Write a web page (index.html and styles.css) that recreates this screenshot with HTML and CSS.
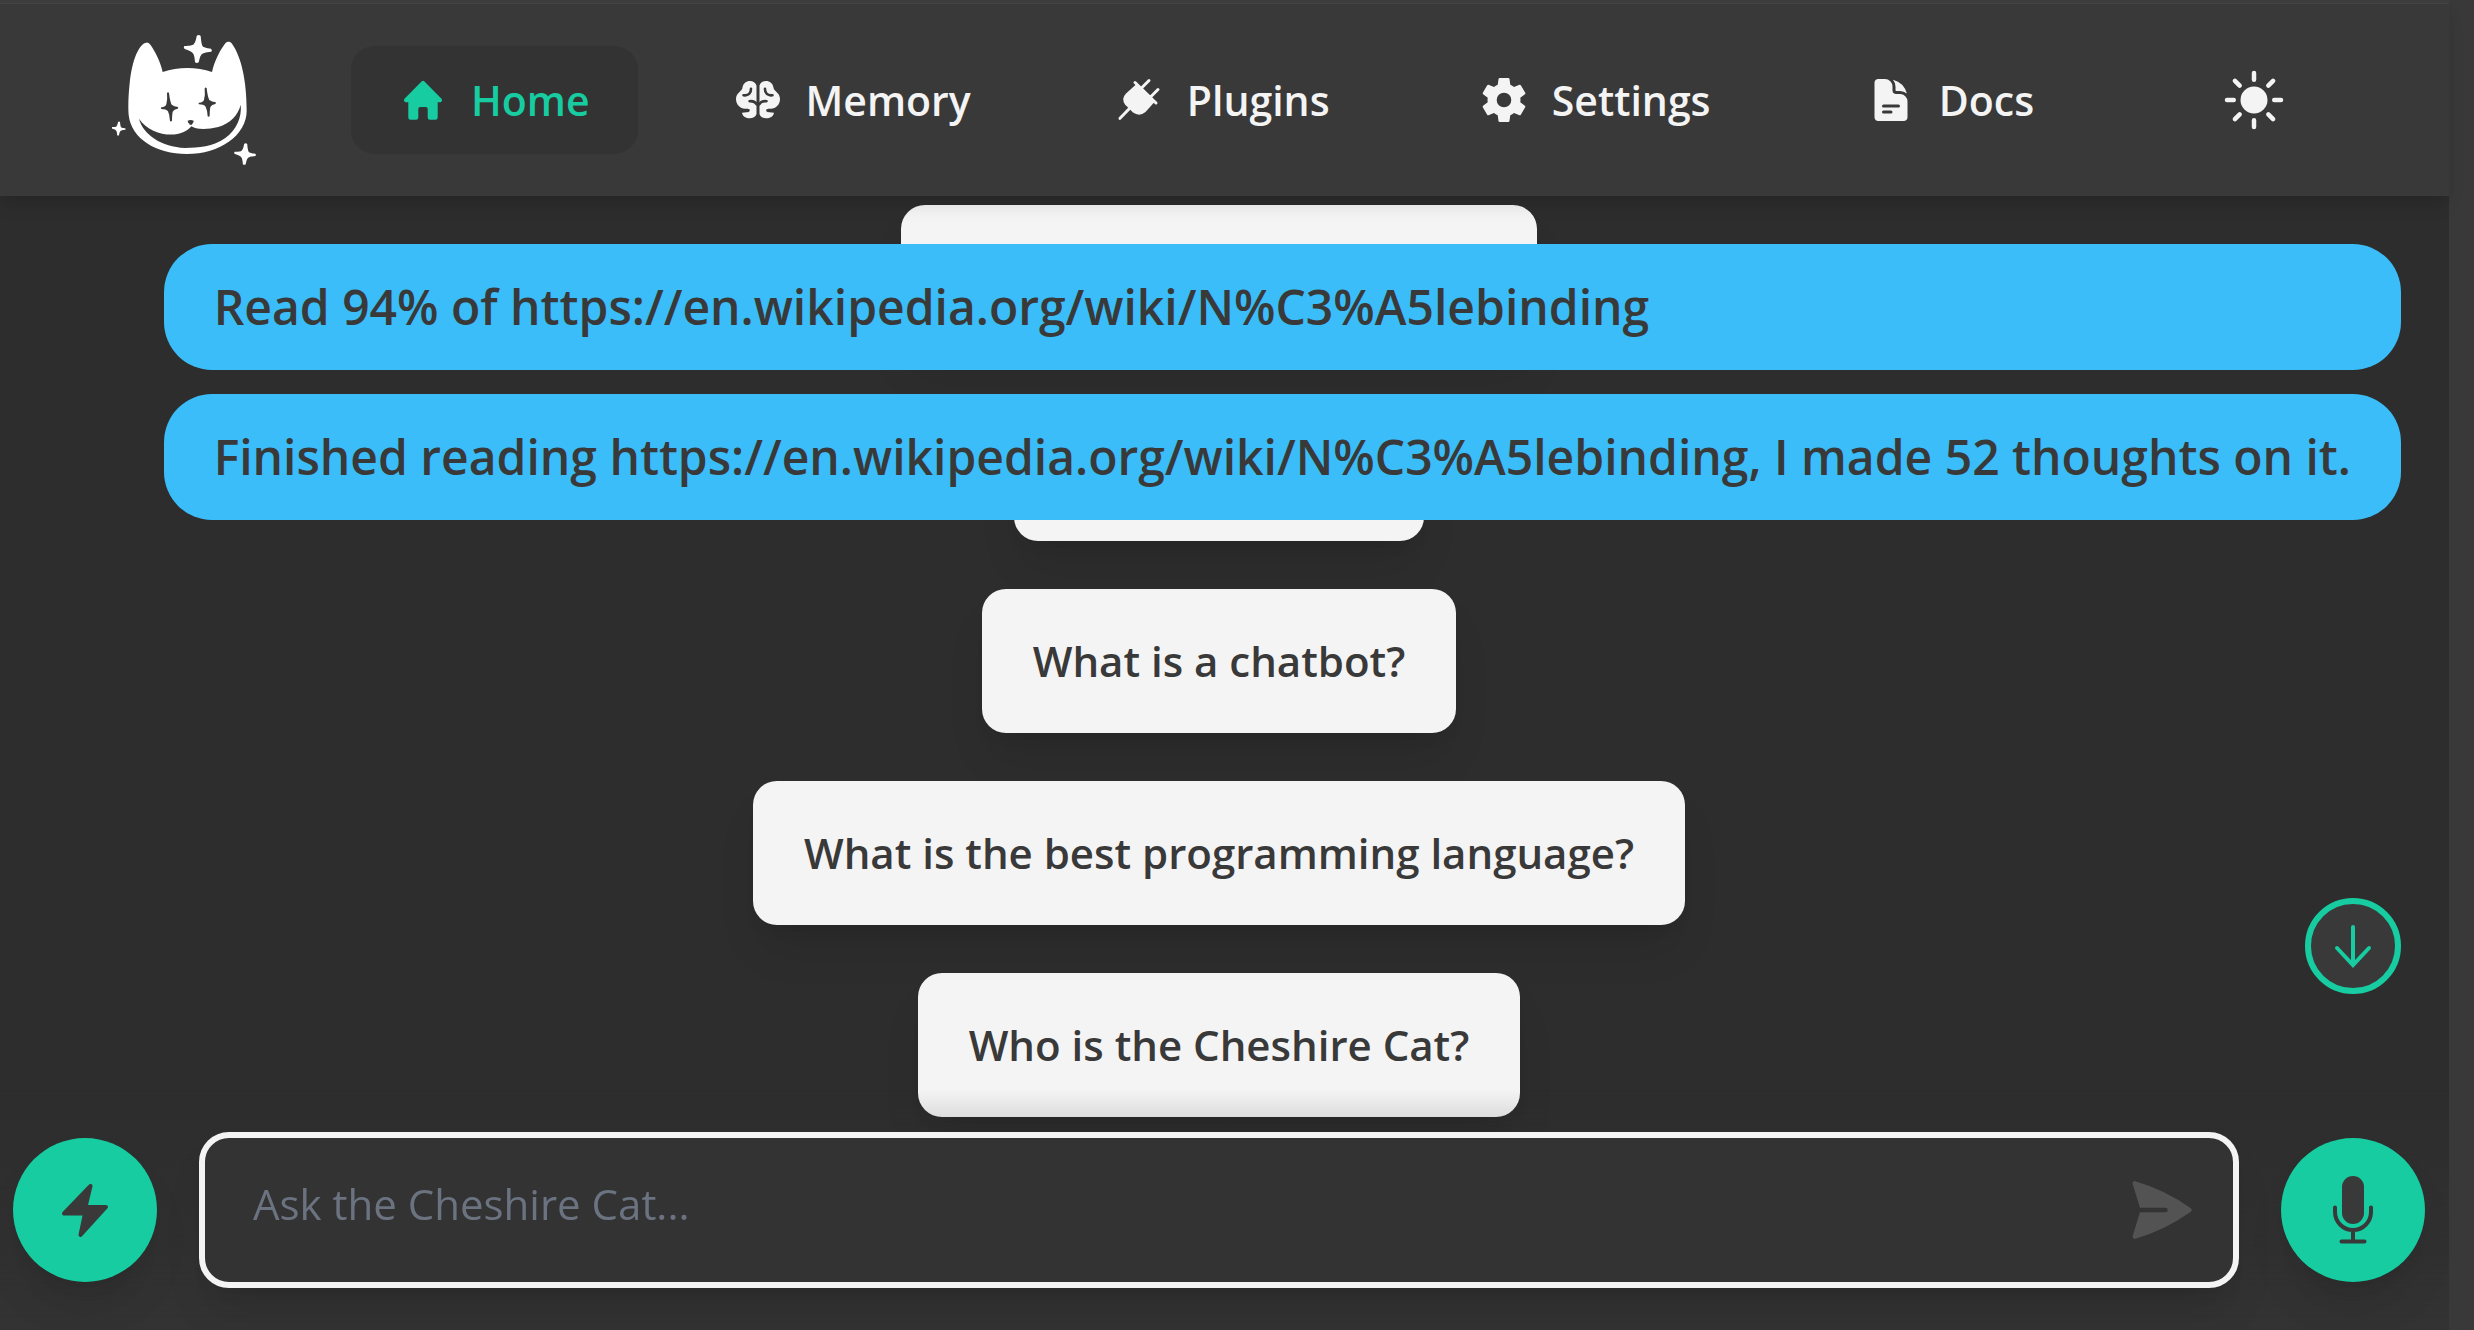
FILE: index.html
```html
<!DOCTYPE html>
<html lang="en">
<head>
<meta charset="utf-8">
<meta name="viewport" content="width=device-width, initial-scale=1">
<title>Cheshire Cat</title>
<link rel="stylesheet" href="styles.css">
</head>
<body>
<header class="topbar">
  <a class="logo" href="#" aria-label="Cheshire Cat">
    <svg viewBox="66 42 432 396" aria-hidden="true">
      <path fill="#fff" d="M169 68C150 70 127 112 119 190C115 225 114 262 116 285C124 357 200 402 290 402C390 402 470 345 470 272C470 185 455 112 426 71C420 64 412 64 406 70C389 92 373 125 366 156C320 140 265 140 218 156C211 125 196 95 180 73Q175 67 169 68Z"/>
      <g fill="#393939">
        <path d="M147 296C172 334 225 349 262 342C280 339 296 330 304 319C315 328 350 330 385 321C420 310 445 285 452 254C456 290 440 330 405 355C370 380 325 384 285 384C215 380 160 345 147 296Z"/>
        <path d="M293 302Q302 298 311 302Q311 308 307 311L306 314H299L298 311Q293 308 293 302Z"/>
        <path id="eye" d="M231 219Q234 214 237 219Q240 245 245 254Q252 260 264 261Q266 263 263 266Q252 268 248 275Q246 285 246 302Q243 306 240 303Q239 284 234 274Q228 267 214 267Q211 265 214 262Q227 261 229 253Q233 240 231 219Z"/>
        <use href="#eye" x="113" y="-14"/>
      </g>
      <g fill="#fff">
        <path id="star" d="M320 48Q326 42 332 48C334 70 336 79 341 81C350 85 357 85 363 86Q368 90 364 95C345 97 338 99 334 104C328 112 328 122 326 127Q321 131 315 127C314 110 312 104 308 99C304 93 292 90 284 87Q279 83 283 78C300 78 307 77 311 73C317 66 318 58 320 48Z"/>
        <use href="#star" transform="translate(-76 282) scale(.5)"/>
        <use href="#star" transform="translate(216 335) scale(.77)"/>
      </g>
    </svg>
  </a>
  <nav class="menu" aria-label="Main">
    <a class="menu-link is-active" href="#">
      <svg class="icon" viewBox="0 0 48 48" aria-hidden="true"><path fill="currentColor" d="M22.500 5.500Q24 4 25.500 5.500L42.500 22.800Q44 25 41.500 26.300H38.700V41.500Q38.700 43.700 36.500 43.700H31Q28.700 43.700 28.700 41.500V33Q28.700 31 26.700 31H21.300Q19.300 31 19.300 33V41.500Q19.300 43.700 17 43.700H11.500Q9.300 43.700 9.300 41.500V26.300H6.500Q4 25 5.500 22.800Z"/></svg>
      Home
    </a>
    <a class="menu-link" href="#">
      <svg class="icon" viewBox="0 0 48 48" aria-hidden="true">
        <g id="lobe"><path fill="currentColor" d="M22.500 9.500C21 3.500 9.500 2.500 8.300 12.500C7.500 15.500 2 17 2 23C2 29 7 34 13.500 32.500L15 36L8 36.700C9 43.500 20.500 44.500 22.500 38Z"/>
        <path fill="none" stroke="#393939" stroke-width="2.600" stroke-linecap="round" d="M9.500 19.200C14.500 20 17.200 17 17 12.700M15.500 25.200C19 24.800 21.500 26 22.800 28.500M6 34.700C10 35 12 34.500 14.500 34.400"/></g>
        <use href="#lobe" transform="matrix(-1 0 0 1 48 0)"/>
      </svg>
      Memory
    </a>
    <a class="menu-link" href="#">
      <svg class="icon" viewBox="0 0 48 48" aria-hidden="true"><path fill="currentColor" d="M21.500 8L11.300 17.300Q6 22.500 10 28.500L18 36.500Q24.500 41 30.500 36L39.500 26Z"/><path fill="none" stroke="currentColor" stroke-width="3" stroke-linecap="round" d="M5 42.300L14.700 32.300M34 4.500L27 11.500M43 13.500L36 20.500M20 6.500L41 27"/></svg>
      Plugins
    </a>
    <a class="menu-link" href="#">
      <svg class="icon" viewBox="1.500 1.500 21 21" aria-hidden="true"><path fill="currentColor" d="M19.140 12.940c.04-.3.06-.61.06-.94 0-.32-.02-.64-.07-.94l2.030-1.580a.49.49 0 00.12-.61l-1.920-3.320a.488.488 0 00-.59-.22l-2.390.96c-.5-.38-1.030-.7-1.620-.94l-.36-2.540a.484.484 0 00-.48-.41h-3.840c-.24 0-.43.17-.47.41l-.36 2.540c-.59.24-1.130.57-1.620.94l-2.390-.96c-.22-.08-.47 0-.59.22L2.740 8.870c-.12.21-.08.47.12.61l2.030 1.580c-.05.3-.09.63-.09.94s.02.64.07.94l-2.030 1.580a.49.49 0 00-.12.61l1.920 3.320c.12.22.37.29.59.22l2.390-.96c.5.38 1.030.7 1.620.94l.36 2.540c.05.24.24.41.48.41h3.840c.24 0 .44-.17.47-.41l.36-2.540c.59-.24 1.130-.56 1.620-.94l2.390.96c.22.08.47 0 .59-.22l1.920-3.320c.12-.22.07-.47-.12-.61l-2.010-1.580zM12 15.200a3.200 3.200 0 110-6.400 3.200 3.200 0 010 6.400z"/></svg>
      Settings
    </a>
    <a class="menu-link" href="#">
      <svg class="icon" viewBox="0 0 24 24" aria-hidden="true"><path fill="currentColor" fill-rule="evenodd" d="M5.625 1.500c-1.036 0-1.875.84-1.875 1.875v17.250c0 1.035.84 1.875 1.875 1.875h12.750c1.035 0 1.875-.84 1.875-1.875V12.750A3.750 3.750 0 0016.500 9h-1.875a1.875 1.875 0 01-1.875-1.875V5.250A3.750 3.750 0 009 1.500H5.625zM7.500 15a.75.75 0 01.75-.75h7.500a.75.75 0 010 1.500h-7.500A.75.75 0 017.500 15zm.75 2.250a.75.75 0 000 1.500H12a.75.75 0 000-1.500H8.250z"/><path fill="currentColor" d="M12.971 1.816A5.230 5.230 0 0114.250 5.250v1.875c0 .207.168.375.375.375H16.500a5.230 5.230 0 013.434 1.279 9.768 9.768 0 00-6.963-6.963z"/></svg>
      Docs
    </a>
  </nav>
  <button class="theme-toggle" type="button" aria-label="Switch theme">
    <svg viewBox="0 0 24 24" aria-hidden="true"><circle cx="12" cy="12" r="4.500" fill="currentColor"/><path fill="none" stroke="currentColor" stroke-width="1.500" stroke-linecap="round" d="M12 3v2.250M12 18.750V21M3 12h2.250M18.750 12H21M5.636 5.636l1.591 1.591M16.773 16.773l1.591 1.591M5.636 18.364l1.591-1.591M16.773 7.227l1.591-1.591"/></svg>
  </button>
</header>

<main class="chat">
  <div class="toasts" role="status">
    <p class="toast">Read 94% of https://en.wikipedia.org/wiki/N%C3%A5lebinding</p>
    <p class="toast">Finished reading https://en.wikipedia.org/wiki/N%C3%A5lebinding, I made 52 thoughts on it.</p>
  </div>
  <div class="prompts">
    <button class="prompt prompt-long" type="button" aria-label="Suggested question 1"></button>
    <button class="prompt prompt-short" type="button" aria-label="Suggested question 2"></button>
    <button class="prompt" type="button">What is a chatbot?</button>
    <button class="prompt" type="button">What is the best programming language?</button>
    <button class="prompt" type="button">Who is the Cheshire Cat?</button>
  </div>
</main>

<button class="scroll-down" type="button" aria-label="Scroll to bottom">
  <svg viewBox="0 0 48 48" aria-hidden="true"><path fill="none" stroke="currentColor" stroke-width="4" stroke-linecap="round" d="M24 5v38M8 26l16 17 16-17"/></svg>
</button>

<form class="composer">
  <button class="round-button" type="button" aria-label="Quick actions">
    <svg viewBox="0 0 72 72" aria-hidden="true"><path fill="currentColor" stroke="currentColor" stroke-width="4" stroke-linejoin="round" d="M41.500 12L15 39.500H36L31.500 61L57 33H36.500Z"/></svg>
  </button>
  <div class="field">
    <textarea class="field-input" rows="1" placeholder="Ask the Cheshire Cat..." aria-label="Message"></textarea>
    <button class="send" type="submit" aria-label="Send">
      <svg viewBox="0 0 24 24" aria-hidden="true"><path fill="currentColor" d="M3.478 2.404a.75.75 0 00-.926.941l2.432 7.905H13.500a.75.75 0 010 1.500H4.984l-2.432 7.905a.75.75 0 00.926.94 60.519 60.519 0 0018.445-8.986.75.75 0 000-1.218A60.517 60.517 0 003.478 2.404z"/></svg>
    </button>
  </div>
  <button class="round-button" type="button" aria-label="Record voice">
    <svg viewBox="0 0 72 72" aria-hidden="true"><rect x="25" y="2" width="22" height="48" rx="11" fill="currentColor"/><path fill="none" stroke="currentColor" stroke-width="4" stroke-linecap="round" d="M18 33.500V38a18 18 0 0036 0V33.500M36 57v10M24.500 67.500h23"/></svg>
  </button>
</form>
</body>
</html>
```
FILE: styles.css
```css
:root {
  --base: #2d2d2d;
  --panel: #393939;
  --field: #333333;
  --light: #f4f4f4;
  --accent: #16cca0;
  --info: #3abdf8;
  --scrollbar: 25px;
  --shadow: 0 30px 45px -9px rgba(0, 0, 0, .1), 0 12px 18px -12px rgba(0, 0, 0, .1);
}

* {
  box-sizing: border-box;
}

body {
  margin: 0;
  min-height: 100vh;
  display: flex;
  flex-direction: column;
  background: var(--panel);
  color: var(--light);
  font-family: "Open Sans", "Liberation Sans", sans-serif;
  font-weight: 600;
}

button {
  margin: 0;
  padding: 0;
  border: 0;
  background: none;
  color: inherit;
  font: inherit;
  cursor: pointer;
}

svg {
  display: block;
}

/* Top bar */
.topbar {
  position: relative;
  z-index: 1;
  display: flex;
  align-items: center;
  height: 196px;
  margin-right: var(--scrollbar);
  padding: 4px 159px 0 112px;
  background: linear-gradient(#3d3d3d 3px, #444444 3px, #444444 4px, var(--panel) 4px);
  box-shadow: 0 12px 18px -3px rgba(0, 0, 0, .1), 0 6px 12px -6px rgba(0, 0, 0, .1);
}

.logo {
  flex: none;
  width: 144px;
}

.menu {
  flex: 1;
  display: grid;
  grid-template-columns: 286fr 331fr 318fr 340fr 268fr;
  gap: 48px;
  margin: 0 132px 0 95px;
}

.menu-link {
  display: flex;
  align-items: center;
  gap: 24px;
  height: 108px;
  padding: 0 48px;
  border-radius: 24px;
  color: var(--light);
  font-size: 41px;
  line-height: 60px;
  text-decoration: none;
}

.menu-link.is-active {
  background: var(--field);
  color: var(--accent);
}

.icon {
  flex: none;
  width: 48px;
  height: 48px;
}

.theme-toggle svg {
  width: 72px;
  height: 72px;
}

/* Conversation */
.chat {
  position: relative;
  flex: 1;
  margin-right: var(--scrollbar);
  padding: 9px 24px 213px 13px;
  background: var(--base);
}

.prompts {
  display: flex;
  flex-direction: column;
  align-items: center;
  gap: 48px;
}

.prompt {
  height: 144px;
  padding: 0 51px;
  border-radius: 24px;
  background: var(--light);
  box-shadow: var(--shadow);
  color: var(--panel);
  font-size: 42px;
  line-height: 60px;
}

.prompt-long {
  width: 636px;
}

.prompt-short {
  width: 410px;
}

.toasts {
  position: absolute;
  top: 48px;
  right: 48px;
  display: grid;
  gap: 24px;
}

.toast {
  margin: 0;
  padding: 27px 50px;
  border-radius: 48px;
  background: var(--info);
  color: var(--panel);
  font-size: 48px;
  line-height: 72px;
}

.scroll-down {
  position: fixed;
  right: 73px;
  bottom: 336px;
  display: grid;
  place-items: center;
  width: 96px;
  height: 96px;
  border: 6px solid var(--accent);
  border-radius: 50%;
  background: var(--panel);
  color: var(--accent);
}

.scroll-down svg {
  width: 48px;
  height: 48px;
}

/* Message composer */
.composer {
  position: fixed;
  right: var(--scrollbar);
  bottom: 0;
  left: 0;
  display: flex;
  align-items: center;
  gap: 42px;
  padding: 42px 24px 42px 13px;
  background: linear-gradient(rgba(51, 51, 51, 0), var(--field));
}

.round-button {
  flex: none;
  display: grid;
  place-items: center;
  width: 144px;
  height: 144px;
  border-radius: 50%;
  background: var(--accent);
  box-shadow: var(--shadow);
  color: var(--panel);
}

.round-button svg {
  width: 72px;
  height: 72px;
}

.field {
  flex: 1;
  display: flex;
  align-items: center;
  height: 156px;
  padding-right: 36px;
  border: 6px solid var(--light);
  border-radius: 30px;
  background: var(--field);
  box-shadow: var(--shadow);
}

.field-input {
  flex: 1;
  height: 144px;
  padding: 36px 48px 48px;
  border: 0;
  outline: 0;
  resize: none;
  background: none;
  color: var(--light);
  font: 400 42px/60px "Open Sans", "Liberation Sans", sans-serif;
}

.field-input::placeholder {
  color: #6b7280;
  opacity: 1;
}

.send {
  color: #535353;
}

.send svg {
  width: 72px;
  height: 72px;
}
```
